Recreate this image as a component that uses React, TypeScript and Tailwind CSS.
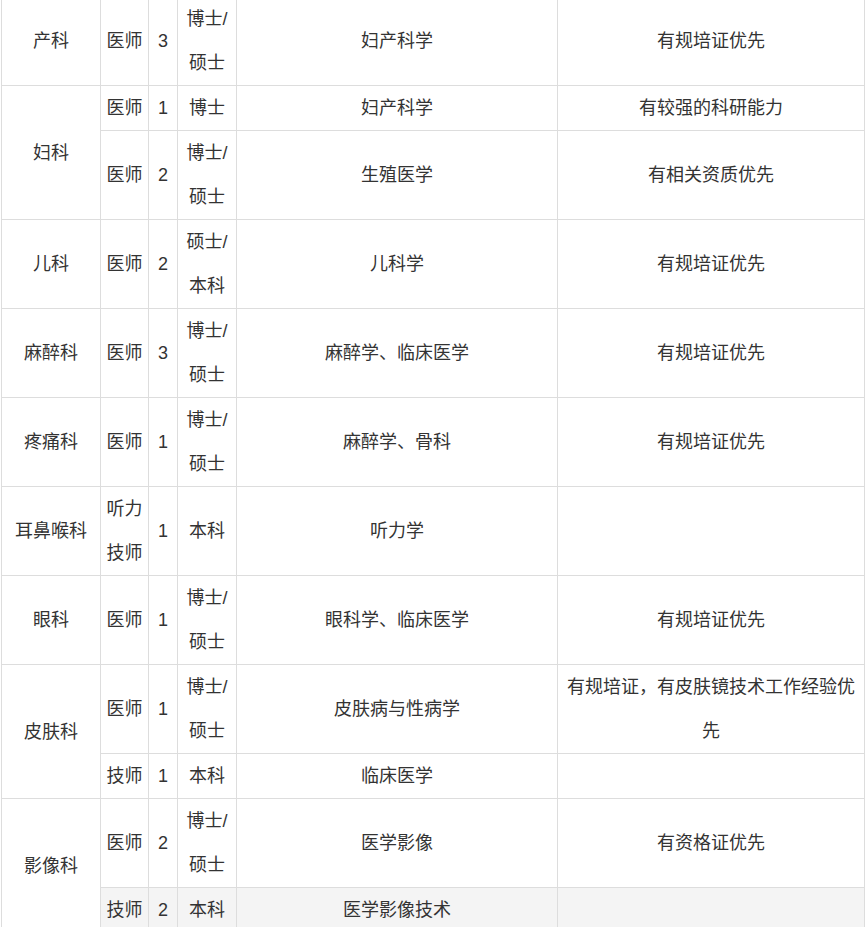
type Row = {
  dept?: string;
  span?: number;
  role: React.ReactNode;
  count: string;
  degree: React.ReactNode;
  major: string;
  note: React.ReactNode;
  shaded?: boolean;
};

const phdMaster = (
  <>
    博士/
    <br />
    硕士
  </>
);

const rows: Row[] = [
  { dept: "产科", role: "医师", count: "3", degree: phdMaster, major: "妇产科学", note: "有规培证优先" },
  { dept: "妇科", span: 2, role: "医师", count: "1", degree: "博士", major: "妇产科学", note: "有较强的科研能力" },
  { role: "医师", count: "2", degree: phdMaster, major: "生殖医学", note: "有相关资质优先" },
  {
    dept: "儿科",
    role: "医师",
    count: "2",
    degree: (
      <>
        硕士/
        <br />
        本科
      </>
    ),
    major: "儿科学",
    note: "有规培证优先",
  },
  { dept: "麻醉科", role: "医师", count: "3", degree: phdMaster, major: "麻醉学、临床医学", note: "有规培证优先" },
  { dept: "疼痛科", role: "医师", count: "1", degree: phdMaster, major: "麻醉学、骨科", note: "有规培证优先" },
  {
    dept: "耳鼻喉科",
    role: (
      <>
        听力
        <br />
        技师
      </>
    ),
    count: "1",
    degree: "本科",
    major: "听力学",
    note: "",
  },
  { dept: "眼科", role: "医师", count: "1", degree: phdMaster, major: "眼科学、临床医学", note: "有规培证优先" },
  {
    dept: "皮肤科",
    span: 2,
    role: "医师",
    count: "1",
    degree: phdMaster,
    major: "皮肤病与性病学",
    note: (
      <>
        有规培证，有皮肤镜技术工作经验优
        <br />
        先
      </>
    ),
  },
  { role: "技师", count: "1", degree: "本科", major: "临床医学", note: "" },
  { dept: "影像科", span: 2, role: "医师", count: "2", degree: phdMaster, major: "医学影像", note: "有资格证优先" },
  { role: "技师", count: "2", degree: "本科", major: "医学影像技术", note: "", shaded: true },
];

const cell = "border-r border-b border-[#dddddd] px-[5px] py-0 text-center align-middle";

export default function App() {
  return (
    <div className="min-h-screen bg-white">
      <table
        className="-mt-1 ml-px w-[864px] table-fixed border-separate border-spacing-0 border-t border-l border-[#dddddd] text-[18px] leading-[44px] text-[#333333]"
        style={{ fontFamily: '"Liberation Sans", "Noto Sans CJK SC", sans-serif' }}
      >
        <colgroup>
          <col className="w-[99px]" />
          <col className="w-[48px]" />
          <col className="w-[29px]" />
          <col className="w-[59px]" />
          <col className="w-[321px]" />
          <col className="w-[307px]" />
        </colgroup>
        <tbody>
          {rows.map((r, i) => {
            const bg = r.shaded ? "bg-[#f4f4f4]" : "";
            return (
              <tr key={i}>
                {r.dept && (
                  <td rowSpan={r.span} className={cell}>
                    {r.dept}
                  </td>
                )}
                <td className={`${cell} ${bg}`}>{r.role}</td>
                <td className={`${cell} ${bg} px-0`}>{r.count}</td>
                <td className={`${cell} ${bg}`}>{r.degree}</td>
                <td className={`${cell} ${bg}`}>{r.major}</td>
                <td className={`${cell} ${bg}`}>{r.note}</td>
              </tr>
            );
          })}
        </tbody>
      </table>
    </div>
  );
}
